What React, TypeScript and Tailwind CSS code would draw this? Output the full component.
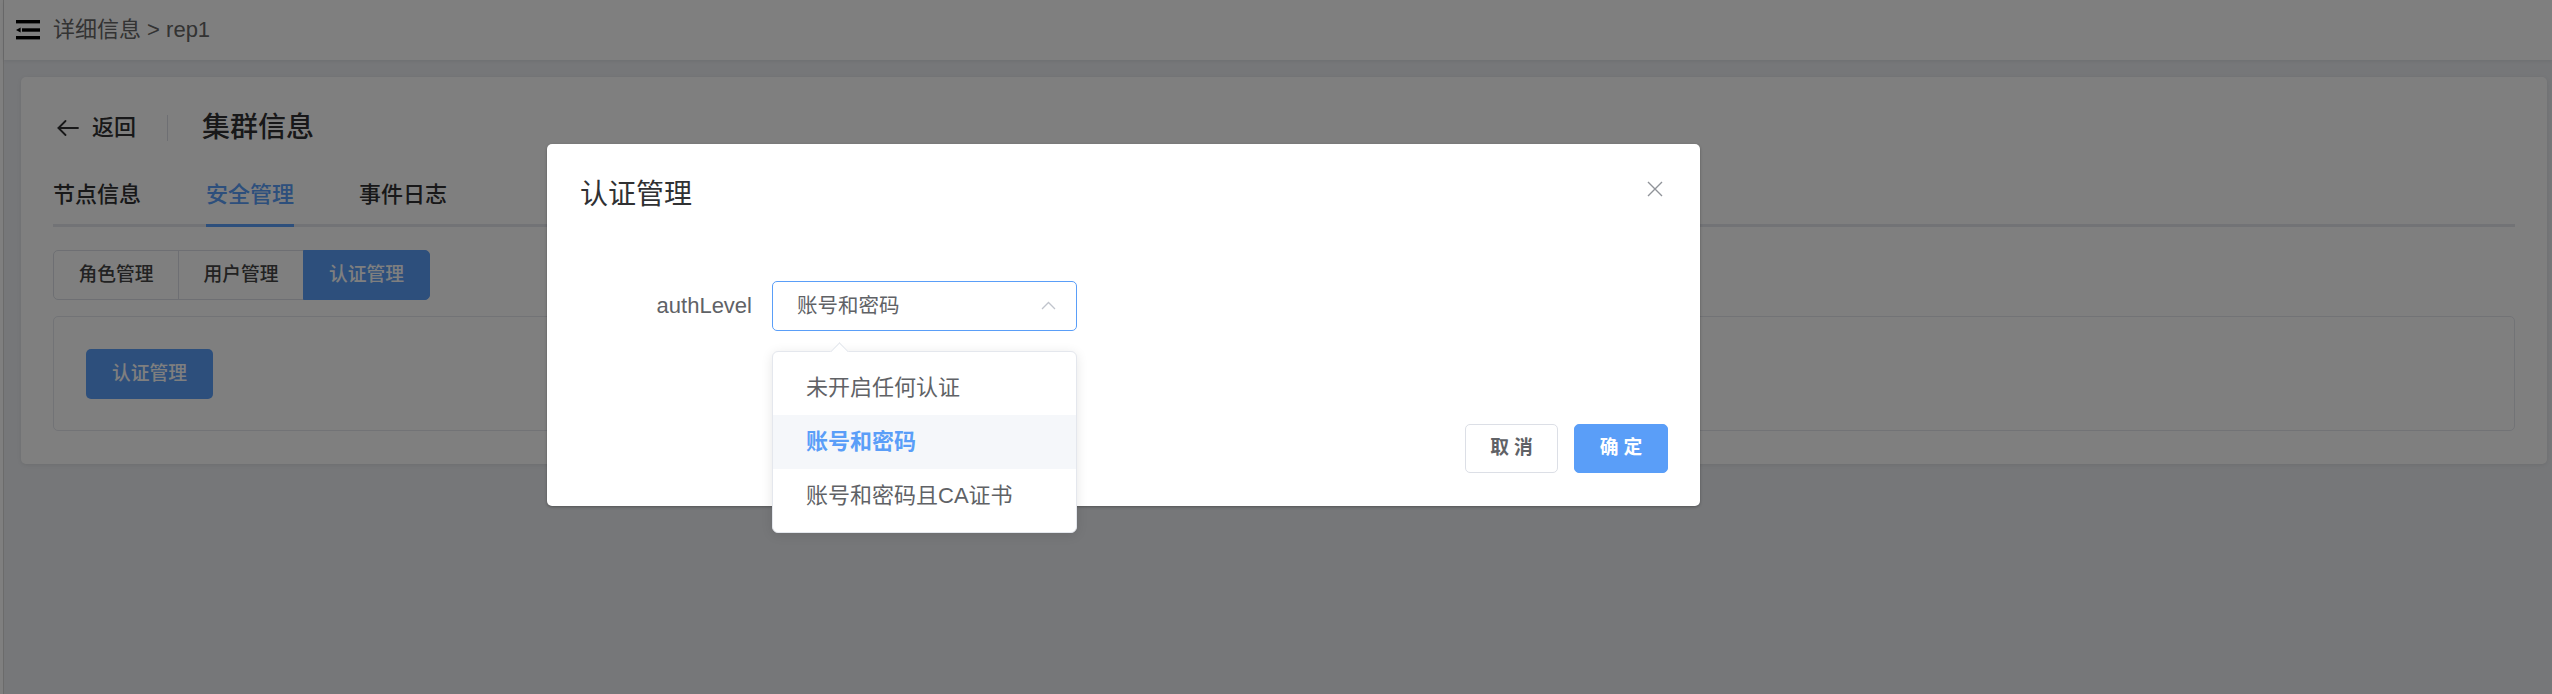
import React from "react";

function MenuFoldIcon() {
  return (
    <svg width="24" height="20" viewBox="0 0 24 20" className="shrink-0">
      <rect x="0" y="0" width="24" height="3.4" fill="#000" />
      <rect x="6" y="8.3" width="18" height="3.4" fill="#000" />
      <polygon points="0,10 4.6,7.4 4.6,12.6" fill="#000" />
      <rect x="0" y="16" width="24" height="3.4" fill="#000" />
    </svg>
  );
}

function BackArrow() {
  return (
    <svg width="22" height="16" viewBox="0 0 22 16" className="shrink-0">
      <path d="M1.5 8 H21" stroke="#303133" strokeWidth="1.8" fill="none" strokeLinecap="round" />
      <path d="M8.5 1 L1.5 8 L8.5 15" stroke="#303133" strokeWidth="1.8" fill="none" strokeLinecap="round" strokeLinejoin="round" />
    </svg>
  );
}

export default function App() {
  return (
    <div className="relative flex h-[694px] w-[2552px] overflow-hidden bg-[#eceef2] font-['Liberation_Sans','Noto_Sans_CJK_SC',sans-serif]">
      {/* collapsed sidebar edge */}
      <div className="w-[4px] shrink-0 border-r border-[#d6d6d6] bg-white" />

      <div className="flex min-w-0 flex-1 flex-col">
        {/* header */}
        <header className="flex h-[60px] shrink-0 items-center bg-white pl-[12px] shadow-[0_1px_4px_rgba(0,21,41,0.08)]">
          <MenuFoldIcon />
          <span className="ml-[13px] text-[22px] leading-none text-[#666]">详细信息 &gt; rep1</span>
        </header>

        {/* content */}
        <main className="ml-[17px] mr-[5px] mt-[17px]">
          <div className="rounded-[5px] bg-white pb-[33px] pl-[32px] pr-[32px] pt-[38px] shadow-[0_1px_4px_rgba(0,0,0,0.08)]">
            {/* back row */}
            <div className="flex h-[26px] items-center">
              <div className="ml-[4px]">
                <BackArrow />
              </div>
              <span className="ml-[13px] text-[22px] font-medium leading-none text-[#303133]">返回</span>
              <div className="ml-[31px] h-[26px] w-px bg-[#dcdfe6]" />
              <span className="ml-[34px] text-[28px] font-medium leading-none text-[#303133]">集群信息</span>
            </div>

            {/* tabs */}
            <div className="mt-[44px] flex gap-[65px] border-b-[3px] border-[#e4e7ed]">
              <div className="-mb-[3px] border-b-[3px] border-transparent pb-[19px] text-[22px] font-medium leading-[20px] text-[#303133]">节点信息</div>
              <div className="-mb-[3px] border-b-[3px] border-[#5a9ef8] pb-[19px] text-[22px] font-medium leading-[20px] text-[#5a9ef8]">安全管理</div>
              <div className="-mb-[3px] border-b-[3px] border-transparent pb-[19px] text-[22px] font-medium leading-[20px] text-[#303133]">事件日志</div>
            </div>

            {/* segmented buttons */}
            <div className="mt-[23px] flex">
              <div className="flex h-[50px] w-[126px] items-center justify-center rounded-l-[5px] border border-[#dcdfe6] bg-white text-[18.75px] font-medium text-[#444]">角色管理</div>
              <div className="-ml-px flex h-[50px] w-[126px] items-center justify-center border border-[#dcdfe6] bg-white text-[18.75px] font-medium text-[#444]">用户管理</div>
              <div className="-ml-px flex h-[50px] w-[127px] items-center justify-center rounded-r-[5px] border border-[#5a9ef8] bg-[#5a9ef8] text-[18.75px] font-medium text-white">认证管理</div>
            </div>

            {/* inner box */}
            <div className="mt-[16px] rounded-[5px] border border-[#e4e7ed] pb-[31px] pl-[32px] pt-[32px]">
              <button className="flex h-[50px] w-[127px] items-center justify-center rounded-[5px] bg-[#5a9ef8] text-[18.75px] font-medium text-white">认证管理</button>
            </div>
          </div>
        </main>
      </div>

      {/* modal overlay */}
      <div className="absolute inset-0 bg-black/50" />

      {/* dialog */}
      <div className="absolute left-[547px] top-[144px] w-[1153px] rounded-[5px] bg-white shadow-[0_1px_3px_rgba(0,0,0,0.3)]">
        <div className="relative pb-[33px] pl-[33px] pr-[32px] pt-[32px]">
          <h2 className="text-[28px] font-normal leading-[38px] text-[#303133]">认证管理</h2>
          <button className="absolute right-[37px] top-[37px] flex h-[16px] w-[16px] items-center justify-center">
            <svg width="16" height="16" viewBox="0 0 16 16">
              <path d="M1 1 L15 15 M15 1 L1 15" stroke="#909399" strokeWidth="1.4" fill="none" />
            </svg>
          </button>

          {/* form row */}
          <div className="mt-[67px] flex items-center">
            <label className="w-[192px] pr-[20px] text-right text-[22px] leading-none text-[#606266]">authLevel</label>
            <div className="relative">
              <div className="relative flex h-[50px] w-[305px] items-center rounded-[5px] border border-[#5a9ef8] bg-white pl-[24px]">
                <span className="text-[20.5px] leading-none text-[#606266]">账号和密码</span>
                <svg width="15" height="9" viewBox="0 0 15 9" className="absolute right-[20px] top-[19px]">
                  <path d="M1 8 L7.5 1.5 L14 8" stroke="#c0c4cc" strokeWidth="1.3" fill="none" />
                </svg>
              </div>

              {/* dropdown */}
              <div className="absolute left-0 top-[70px] z-10 w-[305px] rounded-[6px] border border-[#e4e7ed] bg-white py-[9px] shadow-[0_2px_12px_rgba(0,0,0,0.1)]">
                <div className="absolute -top-[7px] left-[60px] h-[13px] w-[13px] rotate-45 border-l border-t border-[#e4e7ed] bg-white" />
                <div className="relative flex h-[54px] items-center pl-[33px] text-[22px] leading-none text-[#606266]">未开启任何认证</div>
                <div className="relative flex h-[54px] items-center bg-[#f5f7fa] pl-[33px] text-[22px] font-bold leading-none text-[#5a9ef8]">账号和密码</div>
                <div className="relative flex h-[54px] items-center pl-[33px] text-[22px] leading-none text-[#606266]">账号和密码且CA证书</div>
              </div>
            </div>
          </div>

          {/* footer */}
          <div className="mt-[93px] flex justify-end gap-[16px]">
            <button className="flex h-[49px] w-[93px] items-center justify-center rounded-[5px] border border-[#dcdfe6] bg-white text-[18.75px] font-bold text-[#606266]">取 消</button>
            <button className="flex h-[49px] w-[94px] items-center justify-center rounded-[5px] border border-[#5a9ef8] bg-[#5a9ef8] text-[18.75px] font-bold text-white">确 定</button>
          </div>
        </div>
      </div>
    </div>
  );
}
